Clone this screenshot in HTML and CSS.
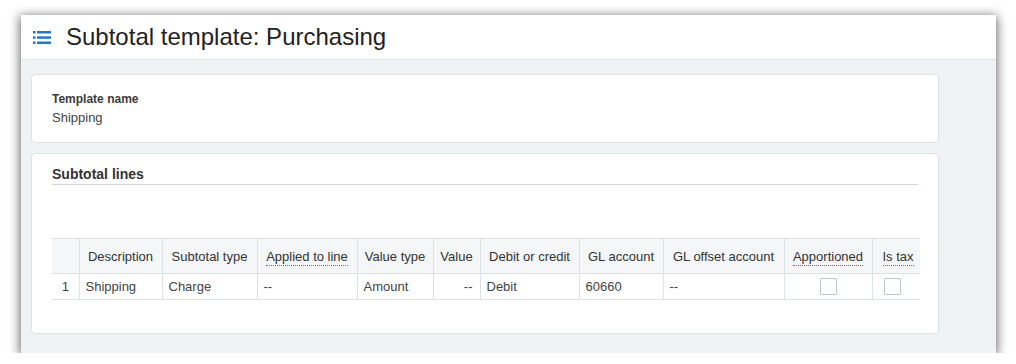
FILE: index.html
```html
<!DOCTYPE html>
<html lang="en">
<head>
    <meta charset="UTF-8">
    <meta name="viewport" content="width=device-width, initial-scale=1.0">
    <title>Subtotal template: Purchasing</title>
    <link rel="stylesheet" href="styles.css">
</head>
<body>
    <div class="window">
        <div class="page-header">
            <svg class="list-icon" width="18" height="14" viewBox="0 0 18 14">
                <rect x="0" y="1" width="2.5" height="2.5" fill="#2276d2"/>
                <rect x="4" y="1" width="14" height="2.5" fill="#2276d2"/>
                <rect x="0" y="6.3" width="2.5" height="2.5" fill="#2276d2"/>
                <rect x="4" y="6.3" width="14" height="2.5" fill="#2276d2"/>
                <rect x="0" y="11.5" width="2.5" height="2.5" fill="#2276d2"/>
                <rect x="4" y="11.5" width="14" height="2.5" fill="#2276d2"/>
            </svg>
            <h1>Subtotal template: Purchasing</h1>
        </div>

        <div class="content">
            <div class="card card-info">
                <div class="field-label">Template name</div>
                <div class="field-value">Shipping</div>
            </div>

            <div class="card card-lines">
                <h2>Subtotal lines</h2>
                <div class="grid-wrap">
                    <table class="grid">
                        <colgroup>
                            <col class="c-num">
                            <col class="c-desc">
                            <col class="c-type">
                            <col class="c-applied">
                            <col class="c-vtype">
                            <col class="c-value">
                            <col class="c-debit">
                            <col class="c-gl">
                            <col class="c-offset">
                            <col class="c-appor">
                            <col class="c-tax">
                        </colgroup>
                        <thead>
                            <tr>
                                <th></th>
                                <th>Description</th>
                                <th>Subtotal type</th>
                                <th><span class="hint">Applied to line</span></th>
                                <th>Value type</th>
                                <th>Value</th>
                                <th>Debit or credit</th>
                                <th>GL account</th>
                                <th>GL offset account</th>
                                <th><span class="hint">Apportioned</span></th>
                                <th class="left"><span class="hint">Is tax</span></th>
                            </tr>
                        </thead>
                        <tbody>
                            <tr>
                                <td class="num">1</td>
                                <td>Shipping</td>
                                <td>Charge</td>
                                <td>--</td>
                                <td>Amount</td>
                                <td class="right">--</td>
                                <td>Debit</td>
                                <td>60660</td>
                                <td>--</td>
                                <td class="center"><span class="checkbox"></span></td>
                                <td class="tax"><span class="checkbox"></span></td>
                            </tr>
                        </tbody>
                    </table>
                </div>
            </div>
        </div>
    </div>
</body>
</html>
```

FILE: styles.css
```css
body {
    margin: 0;
    background: #fff;
    font-family: 'Liberation Sans', Arial, sans-serif;
    color: #333;
}
.window {
    margin: 15px 0 0 21px;
    width: 975px;
    height: 338px;
    background: #f0f3f4;
    box-shadow: 0 2px 10px 1px rgba(0, 0, 0, 0.6);
    overflow: hidden;
}
.page-header {
    height: 45px;
    background: #fff;
    border-bottom: 1px solid #e2e7ea;
    box-sizing: border-box;
    display: flex;
    align-items: center;
    padding-left: 12px;
}
.list-icon {
    margin-right: 15px;
}
h1 {
    margin: 0;
    font-size: 24px;
    font-weight: normal;
    color: #222;
}
.content {
    padding: 14px 57px 0 10px;
    display: flex;
    flex-direction: column;
    gap: 10px;
}
.card {
    background: #fff;
    border: 1px solid #dde2e5;
    border-radius: 4px;
}
.card-info {
    height: 69px;
    box-sizing: border-box;
    padding: 16px 20px 0;
}
.field-label {
    font-size: 12px;
    font-weight: bold;
    line-height: 16px;
    color: #3c3c3c;
}
.field-value {
    margin-top: 2px;
    font-size: 13px;
    line-height: 18px;
    color: #444;
}
.card-lines {
    height: 181px;
    box-sizing: border-box;
    padding: 11px 20px 0;
}
h2 {
    margin: 0;
    font-size: 14px;
    font-weight: bold;
    line-height: 18px;
    padding-bottom: 1px;
    color: #333;
    border-bottom: 1px solid #cfd6da;
}
.grid-wrap {
    margin-top: 53px;
    width: 868px;
    overflow: hidden;
}
.grid {
    border-collapse: collapse;
    table-layout: fixed;
    width: 887px;
    font-size: 13px;
}
.c-num { width: 27px; }
.c-desc { width: 83px; }
.c-type { width: 95px; }
.c-applied { width: 100px; }
.c-vtype { width: 76px; }
.c-value { width: 47px; }
.c-debit { width: 99px; }
.c-gl { width: 84px; }
.c-offset { width: 121px; }
.c-appor { width: 88px; }
.c-tax { width: 67px; }
.grid th {
    height: 34px;
    padding: 0 4px;
    background: #f4f6f7;
    font-weight: normal;
    color: #333;
    white-space: nowrap;
    text-align: center;
    border-top: 1px solid #dce1e4;
    border-bottom: 1px solid #dce1e4;
    border-left: 1px solid #dce1e4;
}
.grid th.left {
    text-align: left;
    padding-left: 10px;
}
.grid td {
    height: 25px;
    padding: 0 6px;
    color: #444;
    white-space: nowrap;
    border-bottom: 1px solid #dce1e4;
    border-left: 1px solid #dce1e4;
}
.grid th:first-child,
.grid td:first-child {
    border-left: none;
}
.grid td.num {
    text-align: center;
}
.grid td.right {
    text-align: right;
    padding-right: 7px;
}
.grid td.center {
    text-align: center;
}
.grid td.tax {
    padding-left: 11px;
}
.hint {
    border-bottom: 1px dotted #2f7fd6;
    padding-bottom: 1px;
}
.checkbox {
    display: inline-block;
    width: 15px;
    height: 15px;
    border: 1px solid #bfc6cb;
    border-radius: 2px;
    background: #fff;
    vertical-align: middle;
}
```
